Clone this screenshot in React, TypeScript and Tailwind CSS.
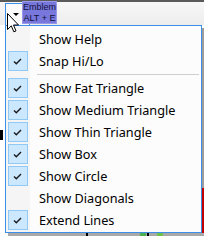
import React from "react";

type Item = { label: string; checked: boolean } | "sep";

const items: Item[] = [
  { label: "Show Help", checked: false },
  { label: "Snap Hi/Lo", checked: true },
  "sep",
  { label: "Show Fat Triangle", checked: true },
  { label: "Show Medium Triangle", checked: true },
  { label: "Show Thin Triangle", checked: true },
  { label: "Show Box", checked: true },
  { label: "Show Circle", checked: true },
  { label: "Show Diagonals", checked: false },
  { label: "Extend Lines", checked: true },
];

function Check() {
  return (
    <svg width="9" height="7" viewBox="0 0 9 7" className="block">
      <path d="M1 3.5 L3.3 5.8 L8 1" fill="none" stroke="#1a1a1a" strokeWidth="1.4" />
    </svg>
  );
}

function MenuRow({ label, checked }: { label: string; checked: boolean }) {
  return (
    <div className="flex h-[22px] items-center">
      <div className="flex w-[22px] justify-center pl-[1px]">
        {checked ? (
          <div className="flex h-[20px] w-[20px] items-center justify-center border border-[#90c8f6] bg-[#cce8ff]">
            <Check />
          </div>
        ) : null}
      </div>
      <span className="ml-[11px] text-[12.7px] leading-none text-black">{label}</span>
    </div>
  );
}

function Cursor() {
  return (
    <svg width="12" height="20" viewBox="0 0 12 20" className="absolute left-[7px] top-[13px]">
      <path
        d="M0.5 0.5 L0.5 16.5 L4.3 12.8 L6.8 18.8 L9 17.9 L6.5 12 L11.5 12 Z"
        fill="#fff"
        stroke="#000"
        strokeWidth="1"
        strokeLinejoin="miter"
      />
    </svg>
  );
}

export default function App() {
  return (
    <div className="relative h-[236px] w-[204px] overflow-hidden bg-white font-['Noto_Sans',sans-serif]">
      {/* toolbar behind */}
      <div className="h-[25px] border-t-2 border-[#5a5a5a] bg-gradient-to-b from-[#f7f7f7] to-[#ededed]" />

      {/* bits of the chart behind the menu */}
      <div className="absolute left-0 top-[130px] h-[10px] w-[3px] bg-black" />
      <div className="absolute left-[202px] top-[28px] h-[160px] w-[2px] bg-[#9c9c9c]" />
      <div className="absolute left-[202px] top-[188px] h-[46px] w-[2px] bg-[#c00000]" />
      <div className="absolute left-[8px] top-[233px] flex h-[3px] w-[196px] bg-[#a8a8a8]">
        <div className="ml-[78px] w-[2px] bg-black" />
        <div className="ml-[52px] w-[6px] bg-[#4caf50]" />
        <div className="ml-px w-[2px] bg-black" />
        <div className="ml-[8px] w-[6px] bg-[#6cc24a]" />
      </div>

      {/* dropdown button */}
      <div className="absolute left-[5px] top-[3px] h-[23px] w-[25px] border border-b-0 border-[#3d8ee6] bg-[#fbfbfb] pl-[7px] pt-[9px]">
        <div className="h-0 w-0 border-x-[3px] border-t-[3px] border-x-transparent border-t-black" />
      </div>

      {/* toolbar label */}
      <div className="absolute left-[22px] top-[1px] flex h-[23px] w-[35px] flex-col items-center justify-center whitespace-nowrap border border-[#9898e6] bg-[#7878dc] font-['Liberation_Sans',sans-serif] text-[9px] leading-[11px] text-[#10103a]">
        <span>Emblem</span>
        <span>ALT + E</span>
      </div>

      {/* menu */}
      <div className="absolute left-[5px] top-[25px] h-[208px] w-[197px] border border-[#3d8ee6] bg-[#fcfcfc] pb-[1px] pt-[2px]">
        <div className="absolute bottom-0 left-0 top-0 w-[24px] bg-[#f5f5f5]" />
        <div className="relative flex flex-col">
          {items.map((it, i) =>
            it === "sep" ? (
              <div key={i} className="flex h-[5px] items-center pl-[31px] pr-[2px]">
                <div className="h-px w-full bg-[#cfcfcf]" />
              </div>
            ) : (
              <MenuRow key={i} label={it.label} checked={it.checked} />
            )
          )}
        </div>
      </div>

      <Cursor />
    </div>
  );
}
